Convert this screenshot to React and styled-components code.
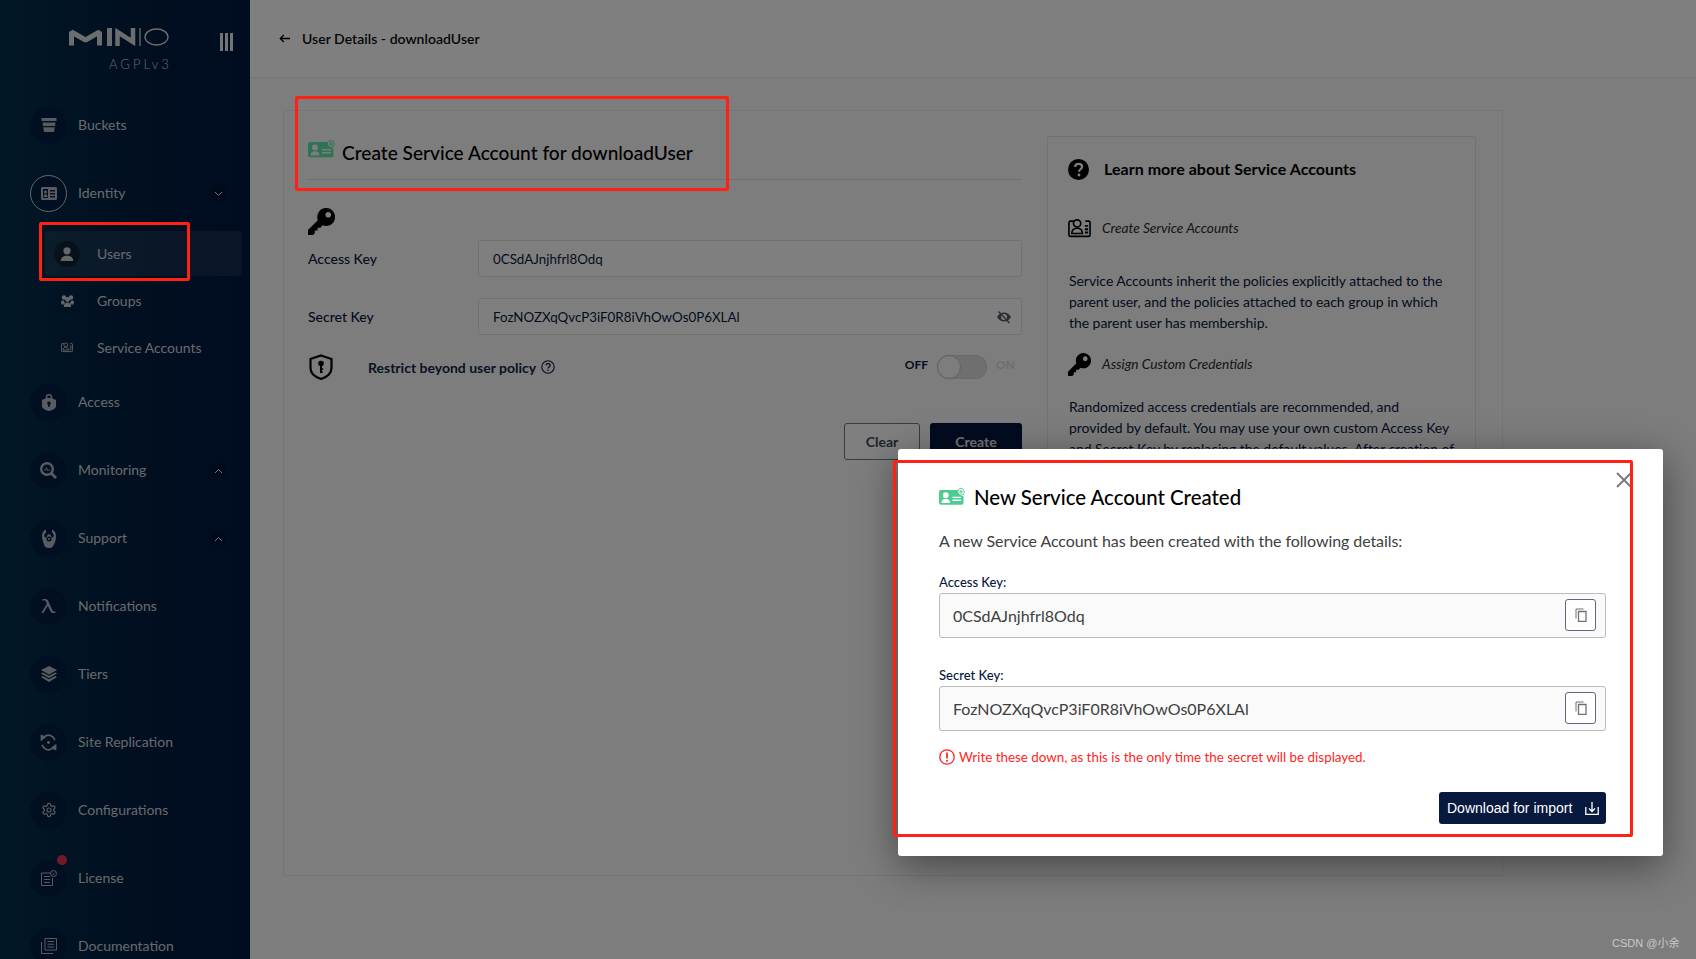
import React from "react";
import styled, { createGlobalStyle } from "styled-components";

const Global = createGlobalStyle`
  html, body { margin: 0; padding: 0; height: 100%; overflow: hidden; }
  body { font-family: Lato, "Noto Sans", sans-serif; color: #07193e; background: #fbfafa; }
  * { box-sizing: border-box; }
`;

const Page = styled.div`
  position: relative; display: flex; width: 1696px; height: 959px; overflow: hidden;
`;
const Sidebar = styled.aside`
  width: 250px; flex: none; height: 959px; overflow: hidden;
  background: linear-gradient(90deg, #042f4d 0%, #032444 35%, #021b40 70%, #011a42 100%);
  color: #dfe3e8;
`;
const Brand = styled.div`
  position: relative; height: 91px; padding: 28px 0 0 69px;
`;
const Edition = styled.div`
  margin: 10px 0 0 40px; font-size: 13px; line-height: 16px; letter-spacing: 3px; color: #c9cdd2; font-weight: 300;
`;
const Collapse = styled.div`
  position: absolute; left: 220px; top: 33px; width: 13px; height: 18px; display: flex; justify-content: space-between;
`;
const CollapseBar = styled.span`
  width: 3px; height: 100%; background: #e6e8ea;
`;
const NavRow = styled.div`
  height: 68px; display: flex; align-items: center; padding-left: 30px; position: relative;
`;
const IconDisc = styled.div`
  width: 37px; height: 37px; flex: none; border-radius: 50%; display: flex; align-items: center; justify-content: center;
  background: rgba(0, 20, 60, .45); color: #b0b8c2; position: relative;
  border: ${p => (p.$active ? "1.5px solid #ccd0d4" : "none")};
`;
const NavLabel = styled.span`
  margin-left: 11px; font-size: 14px; line-height: 18px; color: #ced3d9;
`;
const Chevron = styled.div`
  position: absolute; left: 211px; top: 27px; width: 15px; height: 15px; display: flex; align-items: center; justify-content: center;
  background: rgba(0, 0, 0, .18); border-radius: 2px; color: #e8eaec;
`;
const Dot = styled.span`
  position: absolute; left: 27px; top: -5px; width: 10px; height: 10px; border-radius: 50%; background: #e0334e;
`;
const SubList = styled.div`
  display: flex; flex-direction: column; gap: 2px; padding: 4px 8px 0 45px; margin-bottom: -2px;
`;
const SubRow = styled.div`
  height: 45px; display: flex; align-items: center; border-radius: 3px;
  background: ${p => (p.$active ? "rgba(255,255,255,.08)" : "transparent")};
`;
const SubIcon = styled.div`
  width: 26px; height: 26px; margin-left: 9px; flex: none; border-radius: 50%; display: flex; align-items: center; justify-content: center;
  background: ${p => (p.$active ? "rgba(0,0,0,.35)" : "transparent")}; color: #c8ced4;
`;
const SubLabel = styled.span`
  margin-left: 17px; font-size: 14px; line-height: 18px; color: #ced3d9;
`;

const Main = styled.main`
  flex: 1; min-width: 0; display: flex; flex-direction: column;
`;
const TopBar = styled.header`
  height: 77px; flex: none; background: #fff; display: flex; align-items: center; padding-left: 29px; gap: 12px;
  box-shadow: 0 1px 3px rgba(0,0,0,.06);
`;
const Crumb = styled.span`
  font-size: 14px; color: #0c0c0c; font-weight: 600; letter-spacing: .03px;
`;
const Body = styled.div`
  padding: 33px 0 0 33px;
`;
const Panel = styled.section`
  width: 1220px; height: 766px; border: 1px solid #eaeaea; padding: 25px 25px 0 24px;
  display: grid; grid-template-columns: 714px 429px; column-gap: 25px; align-items: start;
`;
const FormCol = styled.div`
  display: flex; flex-direction: column; padding-top: 1px;
`;
const TitleRow = styled.div`
  height: 43px; display: flex; align-items: flex-end; gap: 7px; padding-bottom: 13px; border-bottom: 1px solid #e0e0e0;
`;
const TitleIcon = styled.div`
  display: flex; margin-bottom: 8px;
`;
const PageTitle = styled.h1`
  margin: 0; font-size: 19.1px; line-height: 26px; font-weight: 500; color: #000;
`;
const KeyHolder = styled.div`
  margin-top: 28px; height: 27px; color: #000; display: flex;
`;
const FieldRow = styled.div`
  margin-top: ${p => p.$gap}px; display: flex; align-items: center;
`;
const FieldLabel = styled.label`
  width: 170px; flex: none; font-size: 14px; font-weight: 500; color: #07193e;
`;
const FieldBox = styled.div`
  flex: 1; height: 37px; border: 1px solid #e2e2e2; border-radius: 3px; display: flex; align-items: center; justify-content: space-between;
  padding: 0 10px 0 14px; font-size: 13.35px; color: #07193e; background: #fff; font-family: Lato, sans-serif;
`;
const RestrictRow = styled.div`
  margin-top: 19px; height: 26px; display: flex; align-items: center; color: #000;
`;
const RestrictLabel = styled.span`
  margin-left: 35px; font-size: 14px; font-weight: 700; color: #07193e; opacity: .95;
`;
const Spacer = styled.div`
  flex: 1;
`;
const ToggleText = styled.span`
  font-size: 12px; font-weight: 700; color: ${p => (p.$on ? "#dddddd" : "#07193e")};
  margin-top: -6px;
`;
const Track = styled.div`
  position: relative; width: 50px; height: 24px; margin: 0 9px; border-radius: 12px; background: #dfdfdf;
  box-shadow: inset 0 0 0 1px #d4d4d4;
`;
const Knob = styled.div`
  position: absolute; left: 0; top: 0; width: 24px; height: 24px; border-radius: 50%; background: #fafafa; border: 1px solid #c2c2c2;
`;
const OnText = styled(ToggleText)`
  width: 26px;
`;
const ButtonRow = styled.div`
  margin-top: 43px; display: flex; justify-content: flex-end; gap: 10px;
`;
const OutlineBtn = styled.button`
  width: 76px; height: 37px; background: #fff; border: 1px solid #6c7a90; border-radius: 3px; font: 700 14px Lato, sans-serif; color: #3f4a60; padding: 0;
`;
const SolidBtn = styled.button`
  width: 92px; height: 37px; background: #07193e; border: 0; border-radius: 3px; font: 700 14px Lato, sans-serif; color: #e8e8e8; padding: 0;
`;
const InfoBox = styled.aside`
  height: 720px; border: 1px solid #e5e5e5; border-radius: 2px; padding: 21px 20px 0 20px; color: #07193e;
`;
const InfoHead = styled.div`
  display: flex; align-items: center; height: 22px; color: #000;
`;
const InfoTitle = styled.h2`
  margin: 0 0 0 15px; font-size: 16px; line-height: 20px; font-weight: 700; color: #000; letter-spacing: .04px;
`;
const InfoSub = styled.div`
  margin-top: ${p => p.$top}px; display: flex; align-items: center; height: 24px; color: #000;
`;
const SubTitle = styled.em`
  margin-left: 11px; font-size: 13.7px; line-height: 18px; color: #2a2a2a;
`;
const InfoText = styled.p`
  margin: ${p => p.$top}px 0 0 1px; width: 385px; font-size: 14px; line-height: 21px; color: #07193e; letter-spacing: -.05px;
`;

const Overlay = styled.div`
  position: absolute; inset: 0; background: rgba(0, 0, 0, .5);
`;
const Modal = styled.div`
  position: absolute; left: 898px; top: 449px; width: 765px; height: 407px; background: #fff; border-radius: 3px;
  padding: 36px 57px 0 41px; box-shadow: 0 10px 40px rgba(0,0,0,.45); color: #07193e;
`;
const CloseBtn = styled.div`
  position: absolute; left: 718px; top: 23px; width: 16px; height: 16px; color: #777; display: flex;
`;
const ModalHead = styled.div`
  display: flex; align-items: center; gap: 9px; height: 24px;
`;
const ModalTitle = styled.h2`
  margin: 0; font-size: 20.4px; line-height: 24px; font-weight: 500; color: #000;
`;
const ModalLead = styled.p`
  margin: 22px 0 0; font-size: 16px; line-height: 20px; color: #404040; letter-spacing: -.08px;
`;
const KeyLabel = styled.div`
  margin-top: ${p => p.$top}px; font-size: 13px; line-height: 18px; font-weight: 500; color: #07193e;
`;
const KeyBox = styled.div`
  margin-top: 2px; height: 45px; border: 1px solid #bbbbbb; border-radius: 3px; background: #fafafa; display: flex; align-items: center;
  justify-content: space-between; padding: 0 9px 0 13px; font-size: 16px; color: #404040;
`;
const CopyBtn = styled.div`
  width: 31px; height: 32px; margin-top: -1px; border: 1px solid #5e6b7e; border-radius: 3px; display: flex; align-items: center; justify-content: center; color: #707070; background: #fff;
`;
const Warning = styled.div`
  margin-top: 17px; display: flex; align-items: center; gap: 4px; font-size: 13.4px; line-height: 18px; color: #ff1f1f;
`;
const ModalActions = styled.div`
  margin-top: 26px; display: flex; justify-content: flex-end;
`;
const DownloadBtn = styled.button`
  width: 167px; height: 32px; background: #07193e; border: 0; border-radius: 3px; color: #fff; display: flex; align-items: center; justify-content: space-between;
  padding: 0 7px 0 8px; font: 400 14px "Liberation Sans", Arial, sans-serif;
`;
const RedBox = styled.div`
  position: absolute; left: ${p => p.$x}px; top: ${p => p.$y}px; width: ${p => p.$w}px; height: ${p => p.$h}px;
  border: 3px solid #ff2116; border-radius: 2px; pointer-events: none;
`;
const Watermark = styled.div`
  position: absolute; left: 1612px; top: 934px; font: 11px "Liberation Sans", "Noto Sans CJK SC", sans-serif; color: #c9c9c9; white-space: nowrap;
`;

/* icons */
const Svg = ({ s = 16, h, vb = "0 0 24 24", children, ...r }) => (
  <svg width={s} height={h || s} viewBox={vb} fill="currentColor" {...r}>{children}</svg>
);
const Logo = () => (
  <svg width="100" height="18" viewBox="0 0 100 18" style={{ display: "block" }} fill="none" stroke="#d9dadc">
    <path d="M2.500 17.500V4L16.500 12L30.500 4V17.500" strokeWidth="5" strokeLinejoin="bevel" />
    <path d="M40.500 0v18" strokeWidth="5" />
    <path d="M48.500 18V4L64 14V0" strokeWidth="4.500" />
    <path d="M71 0v18" strokeWidth="1.300" />
    <ellipse cx="87.500" cy="9" rx="11.500" ry="8" strokeWidth="1.300" />
  </svg>
);
const ChevDown = () => (
  <svg width="9" height="6" viewBox="0 0 9 6" fill="none" stroke="currentColor" strokeWidth="1"><path d="M1 1l3.5 3.5L8 1" /></svg>
);
const ChevUp = () => (
  <svg width="9" height="6" viewBox="0 0 9 6" fill="none" stroke="currentColor" strokeWidth="1"><path d="M1 5l3.5-3.5L8 5" /></svg>
);
const BucketIcon = () => (
  <Svg s={16} vb="0 0 16 16"><path d="M.5 1h15v3H.5zM1.500 5.500h13l-.5 3.500H2zM2.300 10.300h11.400L13 15H3z" /></Svg>
);
const CardIcon = () => (
  <Svg s={16} h={13} vb="0 0 16 13"><path fillRule="evenodd" d="M1.500 0h13A1.500 1.500 0 0 1 16 1.500v10a1.500 1.500 0 0 1-1.500 1.500h-13A1.500 1.500 0 0 1 0 11.500v-10A1.500 1.500 0 0 1 1.500 0zM2 2v9h5V2zM9 3v1.500h5V3zM9 6v1.500h5V6zM9 9v1.500h5V9z" /><circle cx="4.500" cy="5" r="1.500" /><path d="M2.500 10c0-2 1-2.800 2-2.800s2 .8 2 2.800z" /></Svg>
);
const UserIcon = () => (
  <Svg s={14} vb="0 0 14 14"><circle cx="7" cy="3.800" r="3.600" /><path d="M.8 14c0-3.500 2.700-5.200 6.200-5.200s6.200 1.700 6.200 5.200z" /></Svg>
);
const GroupIcon = () => (
  <Svg s={13} h={12} vb="0 0 13 12"><circle cx="3" cy="2.500" r="2.200" /><circle cx="10" cy="2.500" r="2.200" /><circle cx="6.500" cy="4.500" r="2.400" /><path d="M0 7c0-1 1-1.500 2.500-1.500L4 8l-1 1.500H.6zM13 7c0-1-1-1.500-2.500-1.500L9 8l1 1.500h2.400zM2.800 12c0-3 1.500-4.500 3.700-4.500s3.700 1.500 3.700 4.500z" /></Svg>
);
const SaIcon = ({ s = 12 }) => (
  <svg width={s} height={s * 0.85} viewBox="0 0 24 20" fill="none" stroke="currentColor" strokeWidth="1.700" style={{ flex: "none" }}>
    <path d="M6 3H2.500A1.500 1.500 0 0 0 1 4.500v13A1.500 1.500 0 0 0 2.500 19h19a1.500 1.500 0 0 0 1.500-1.500v-13A1.500 1.500 0 0 0 21.500 3H18" />
    <circle cx="9.500" cy="5.500" r="3.800" />
    <path d="M4 16c0-4 2.500-5.500 5.500-5.500S15 12 15 16z" />
    <path d="M17.500 8h3.500M17.500 11.500h3.500M17.500 15h3.500" strokeWidth="2" />
  </svg>
);
const LockShieldIcon = () => (
  <Svg s={14} h={17} vb="0 0 14 17"><path fillRule="evenodd" d="M7 0c2 0 3.200 1.300 3.200 3v1.200L14 6v6c0 2.500-3.500 4.300-7 5-3.500-.7-7-2.500-7-5V6l3.800-1.800V3C3.800 1.300 5 0 7 0zm0 1.500C6 1.500 5.300 2.200 5.300 3v1h3.400V3c0-.8-.7-1.500-1.700-1.500zM7 7.500a1.800 1.800 0 0 0-.8 3.400V13h1.600v-2.100A1.800 1.800 0 0 0 7 7.500z" /></Svg>
);
const MonitorIcon = () => (
  <svg width="17" height="17" viewBox="0 0 17 17" fill="none" stroke="currentColor"><circle cx="7" cy="7" r="5.800" strokeWidth="2.400" /><path d="M11.500 11.500L16 16" strokeWidth="2.800" /><path d="M4 8h1.500l1-2.500 1.200 3.500.8-1h1.500" strokeWidth=".9" /></svg>
);
const SupportIcon = () => (
  <Svg s={14} h={19} vb="0 0 14 19"><path fillRule="evenodd" d="M4 .5v3C2.700 4.500 2 6 2.200 7.500L4.300 9 5 6.500l2-1.500 2 1.500.7 2.500 2.100-1.500C12 6 11.300 4.500 10 3.500v-3c2.500 1 4 3.500 4 6.500 0 3-.7 6-2 8.500-.9 1.700-1.600 3.500-5 3.500-3 0-4.500-1.500-5-3.500C1 12.500 0 10 0 7 0 4 1.500 1.500 4 .5zM7 7.500a2.500 2.500 0 1 0 0 5 2.500 2.500 0 0 0 0-5zM7 9a1 1 0 1 1 0 2 1 1 0 0 1 0-2z" /></Svg>
);
const LambdaIcon = () => (
  <Svg s={16} h={16} vb="0 0 16 16"><path d="M1.500 1h3c1.300 0 2.200.7 2.700 2l4.300 9.500c.3.700.7 1 1.400 1h1.400V15h-2.300c-1.200 0-2-.6-2.500-1.800L6.800 7.700 2.400 15H.4l5.500-9.200-.6-1.600C5 3.200 4.500 2.600 3.500 2.600h-2z" /></Svg>
);
const LayersIcon = () => (
  <svg width="16" height="16" viewBox="0 0 16 16" fill="currentColor"><path d="M8 0l8 4-8 4.400L0 4z" /><path d="M1.800 6.400L8 9.800l6.200-3.400L16 7.500 8 12 0 7.500z" /><path d="M1.800 9.900L8 13.300l6.200-3.400L16 11l-8 5-8-5z" /></svg>
);
const ReplicateIcon = () => (
  <svg width="17" height="17" viewBox="0 0 16 16" fill="none" stroke="currentColor" strokeWidth="1.600"><path d="M14 5.800A6.500 6.500 0 0 0 5 1.800M2 10.200A6.500 6.500 0 0 0 11 14.200" /><path d="M.8.800v5.700L6 2.500zM15.200 15.200V9.500L10 13.500z" fill="currentColor" strokeWidth=".4" /><circle cx="8" cy="8" r="1.400" fill="currentColor" stroke="none" /></svg>
);
const GearIcon = () => (
  <svg width="16" height="16" viewBox="0 0 24 24" fill="none" stroke="currentColor" strokeWidth="1.800"><path d="M12.220 2h-.44a2 2 0 0 0-2 2v.18a2 2 0 0 1-1 1.730l-.43.250a2 2 0 0 1-2 0l-.15-.080a2 2 0 0 0-2.730.730l-.22.380a2 2 0 0 0 .730 2.730l.15.100a2 2 0 0 1 1 1.720v.510a2 2 0 0 1-1 1.740l-.15.090a2 2 0 0 0-.730 2.730l.22.380a2 2 0 0 0 2.730.730l.15-.080a2 2 0 0 1 2 0l.43.250a2 2 0 0 1 1 1.730V20a2 2 0 0 0 2 2h.44a2 2 0 0 0 2-2v-.18a2 2 0 0 1 1-1.730l.43-.250a2 2 0 0 1 2 0l.15.080a2 2 0 0 0 2.730-.730l.22-.390a2 2 0 0 0-.730-2.730l-.15-.080a2 2 0 0 1-1-1.740v-.500a2 2 0 0 1 1-1.740l.15-.090a2 2 0 0 0 .730-2.730l-.22-.380a2 2 0 0 0-2.730-.730l-.15.080a2 2 0 0 1-2 0l-.43-.250a2 2 0 0 1-1-1.730V4a2 2 0 0 0-2-2z" /><circle cx="12" cy="12" r="3" /></svg>
);
const LicenseIcon = () => (
  <svg width="16" height="16" viewBox="0 0 16 16" fill="none" stroke="currentColor" strokeWidth="1"><path d="M9 3H.5v12.500h11V8" /><path d="M3 6.500h6M3 9.500h6M3 12.500h6" strokeWidth="1.200" /><circle cx="12.500" cy="3.500" r="3" /><path d="M11.200 3.500l1 1 1.500-1.800" strokeWidth=".8" /></svg>
);
const DocIcon = () => (
  <svg width="16" height="16" viewBox="0 0 16 16" fill="none" stroke="currentColor" strokeWidth="1"><path d="M4 .5h11.500v11.500H4zM.5 4v11.500H12" /><path d="M6.500 3.500h6.500M6.500 6.200h6.500M6.500 9h6.500" /></svg>
);
const ArrowLeft = () => (
  <svg width="11" height="9" viewBox="0 0 11 9" fill="none" stroke="#000" strokeWidth="1.300"><path d="M11 4.500H1.500M4.800 1L1.300 4.500 4.800 8" /></svg>
);
const AddCard = ({ w, color }) => (
  <svg width={w} height={w * 0.68} viewBox="0 0 27 18.400" style={{ flex: "none", display: "block" }}>
    <path fill={color} fillRule="evenodd" d="M2 2h17.500a6 6 0 0 0 6 6.500V15.400a2 2 0 0 1-2 2H2a2 2 0 0 1-2-2V4a2 2 0 0 1 2-2zM7 4.500a3 3 0 1 0 0 6 3 3 0 0 0 0-6zM2.500 15.500h9c0-3-2-4.300-4.500-4.300s-4.500 1.300-4.500 4.300zM14 9v1.500h9V9zM14 12v1.500h9V12z" />
    <circle cx="22.800" cy="4" r="3.500" fill="none" stroke={color} strokeWidth="1" />
    <path d="M22.800 2v4M20.800 4h4" stroke={color} strokeWidth="1.100" />
  </svg>
);
const KeyIcon = ({ s }) => (
  <svg width={s} height={s} viewBox="0 0 24 24" fill="currentColor" style={{ flex: "none" }}>
    <path fillRule="evenodd" d="M16 0a8 8 0 1 1-3 15.400L11 17.500H8.500V20H6v2.500l-1.500 1.500H0v-4.500l8.700-8.700A8 8 0 0 1 16 0zm2 3.500a2.500 2.500 0 1 0 0 5 2.500 2.500 0 0 0 0-5z" />
  </svg>
);
const EyeOff = () => (
  <svg width="14" height="14" viewBox="0 0 14 14" fill="#525a66"><path fillRule="evenodd" d="M7 2.500c3 0 5.500 2 7 4.500-1.500 2.500-4 4.500-7 4.500S1.500 9.500 0 7c1.500-2.500 4-4.500 7-4.500zM7 4a3 3 0 1 0 0 6 3 3 0 0 0 0-6z" /><path d="M2 1l11 11.500-1 1L1 2z" /></svg>
);
const ShieldKey = () => (
  <svg width="24" height="26" viewBox="0 0 24 26" fill="none" stroke="currentColor" strokeWidth="2.200" style={{ flex: "none", marginLeft: 1 }}>
    <path d="M12 1.500L22.500 5v9c0 5-4.500 9-10.500 11C6 23 1.500 19 1.500 14V5z" />
    <circle cx="12" cy="9.500" r="2.800" fill="currentColor" stroke="none" />
    <path d="M12 11v8" strokeWidth="2" />
    <path d="M12 15h2.200M12 18h1.800" strokeWidth="1.300" />
  </svg>
);
const Help = () => (
  <svg width="14" height="14" viewBox="0 0 14 14" fill="none" stroke="#07193e" style={{ marginLeft: 5 }}><circle cx="7" cy="7" r="6.200" strokeWidth="1.100" /><path d="M4.900 5.400C5 4.200 6 3.600 7 3.600c1.200 0 2.100.8 2.100 1.800 0 1.500-2.100 1.600-2.100 3.100" strokeWidth="1.200" /><circle cx="7" cy="10.300" r=".8" fill="#07193e" stroke="none" /></svg>
);
const QuestionIcon = () => (
  <svg width="21" height="21" viewBox="0 0 21 21" style={{ flex: "none" }}><circle cx="10.500" cy="10.500" r="10.500" fill="#000" /><path d="M7 8c.1-2 1.600-3.200 3.600-3.200 2.100 0 3.500 1.200 3.500 2.900 0 2.600-3.100 2.500-3.100 5" fill="none" stroke="#fff" strokeWidth="2.200" /><circle cx="11" cy="16" r="1.400" fill="#fff" /></svg>
);
const CopyIcon = () => (
  <svg width="12" height="14" viewBox="0 0 12 14" fill="none" stroke="currentColor"><path d="M1 10.500V1h7.500" strokeWidth="1" /><path d="M3.500 3.500h7.500v10H3.500z" strokeWidth="1.300" /></svg>
);
const Alert = () => (
  <svg width="16" height="16" viewBox="0 0 16 16" fill="none" stroke="#ff1f1f" style={{ flex: "none" }}><circle cx="8" cy="8" r="7.200" strokeWidth="1.300" /><path d="M8 3.500v6" strokeWidth="1.700" /><circle cx="8" cy="11.800" r="1" fill="#ff1f1f" stroke="none" /></svg>
);
const DownloadIcon = () => (
  <svg width="14" height="13" viewBox="0 0 14 13" fill="none" stroke="#fff" strokeWidth="1.300"><path d="M.8 5v7.300h12.400V5" /><path d="M7 0v9M4 6.500L7 9.500l3-3" /></svg>
);
const X = () => (
  <svg width="16" height="16" viewBox="0 0 16 16" stroke="currentColor" strokeWidth="1.800"><path d="M1 1l14 14M15 1L1 15" /></svg>
);

const Item = ({ icon, label, active, chev, dot }) => (
  <NavRow>
    <IconDisc $active={active}>{icon}{dot && <Dot />}</IconDisc>
    <NavLabel>{label}</NavLabel>
    {chev && <Chevron>{chev === "down" ? <ChevDown /> : <ChevUp />}</Chevron>}
  </NavRow>
);

export default function App() {
  return (
    <Page>
      <Global />
      <Sidebar>
        <Brand>
          <Logo />
          <Edition>AGPLv3</Edition>
          <Collapse><CollapseBar /><CollapseBar /><CollapseBar /></Collapse>
        </Brand>
        <Item icon={<BucketIcon />} label="Buckets" />
        <Item icon={<CardIcon />} label="Identity" active chev="down" />
        <SubList>
          <SubRow $active><SubIcon $active><UserIcon /></SubIcon><SubLabel>Users</SubLabel></SubRow>
          <SubRow><SubIcon><GroupIcon /></SubIcon><SubLabel>Groups</SubLabel></SubRow>
          <SubRow><SubIcon><SaIcon /></SubIcon><SubLabel>Service Accounts</SubLabel></SubRow>
        </SubList>
        <Item icon={<LockShieldIcon />} label="Access" />
        <Item icon={<MonitorIcon />} label="Monitoring" chev="up" />
        <Item icon={<SupportIcon />} label="Support" chev="up" />
        <Item icon={<LambdaIcon />} label="Notifications" />
        <Item icon={<LayersIcon />} label="Tiers" />
        <Item icon={<ReplicateIcon />} label="Site Replication" />
        <Item icon={<GearIcon />} label="Configurations" />
        <Item icon={<LicenseIcon />} label="License" dot />
        <Item icon={<DocIcon />} label="Documentation" />
      </Sidebar>
      <Main>
        <TopBar><ArrowLeft /><Crumb>User Details - downloadUser</Crumb></TopBar>
        <Body>
          <Panel>
            <FormCol>
              <TitleRow>
                <TitleIcon><AddCard w={27} color="#5ce6a8" /></TitleIcon>
                <PageTitle>Create Service Account for downloadUser</PageTitle>
              </TitleRow>
              <KeyHolder><KeyIcon s={27} /></KeyHolder>
              <FieldRow $gap={5}>
                <FieldLabel>Access Key</FieldLabel>
                <FieldBox>0CSdAJnjhfrl8Odq</FieldBox>
              </FieldRow>
              <FieldRow $gap={21}>
                <FieldLabel>Secret Key</FieldLabel>
                <FieldBox>FozNOZXqQvcP3iF0R8iVhOwOs0P6XLAl<EyeOff /></FieldBox>
              </FieldRow>
              <RestrictRow>
                <ShieldKey />
                <RestrictLabel>Restrict beyond user policy</RestrictLabel>
                <Help />
                <Spacer />
                <ToggleText>OFF</ToggleText>
                <Track><Knob /></Track>
                <OnText $on>ON</OnText>
              </RestrictRow>
              <ButtonRow>
                <OutlineBtn>Clear</OutlineBtn>
                <SolidBtn>Create</SolidBtn>
              </ButtonRow>
            </FormCol>
            <InfoBox>
              <InfoHead><QuestionIcon /><InfoTitle>Learn more about Service Accounts</InfoTitle></InfoHead>
              <InfoSub $top={36}><SaIcon s={23} /><SubTitle>Create Service Accounts</SubTitle></InfoSub>
              <InfoText $top={30}>
                Service Accounts inherit the policies explicitly attached to the parent user, and the policies attached to each group in which the parent user has membership.
              </InfoText>
              <InfoSub $top={19}><KeyIcon s={23} /><SubTitle>Assign Custom Credentials</SubTitle></InfoSub>
              <InfoText $top={20}>
                Randomized access credentials are recommended, and provided by default. You may use your own custom Access Key and Secret Key by replacing the default values. After creation of any Service Account, you will be given the opportunity to view and download the account credentials.
              </InfoText>
            </InfoBox>
          </Panel>
        </Body>
      </Main>
      <Overlay />
      <Modal>
        <CloseBtn><X /></CloseBtn>
        <ModalHead>
          <AddCard w={26} color="#4ccb92" />
          <ModalTitle>New Service Account Created</ModalTitle>
        </ModalHead>
        <ModalLead>A new Service Account has been created with the following details:</ModalLead>
        <KeyLabel $top={22}>Access Key:</KeyLabel>
        <KeyBox>0CSdAJnjhfrl8Odq<CopyBtn><CopyIcon /></CopyBtn></KeyBox>
        <KeyLabel $top={28}>Secret Key:</KeyLabel>
        <KeyBox>FozNOZXqQvcP3iF0R8iVhOwOs0P6XLAl<CopyBtn><CopyIcon /></CopyBtn></KeyBox>
        <Warning><Alert />Write these down, as this is the only time the secret will be displayed.</Warning>
        <ModalActions>
          <DownloadBtn>Download for import<DownloadIcon /></DownloadBtn>
        </ModalActions>
      </Modal>
      <RedBox $x={295} $y={96} $w={434} $h={95} />
      <RedBox $x={39} $y={222} $w={151} $h={59} />
      <RedBox $x={893} $y={460} $w={740} $h={377} />
      <Watermark>CSDN @小余</Watermark>
    </Page>
  );
}
